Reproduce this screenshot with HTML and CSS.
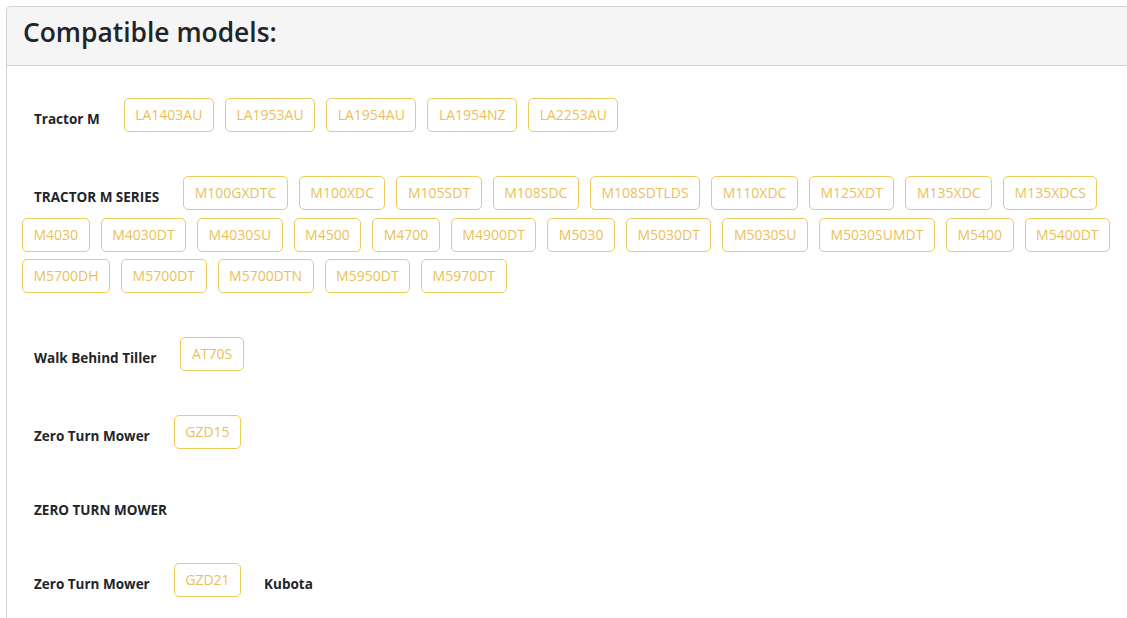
FILE: index.html
```html
<!DOCTYPE html>
<html>
<head>
    <title>Compatible models</title>
    <link rel="stylesheet" href="styles.css">
</head>
<body>
    <div class="card">
        <div class="card-header">
            <h2>Compatible models:</h2>
        </div>
        <div class="card-body">
            <!-- one row per equipment type, tags wrap under the label -->
            <div class="model-group">
                <span class="group-label">Tractor M</span>
                <span class="model-tag">LA1403AU</span>
                <span class="model-tag">LA1953AU</span>
                <span class="model-tag">LA1954AU</span>
                <span class="model-tag">LA1954NZ</span>
                <span class="model-tag">LA2253AU</span>
            </div>

            <div class="model-group">
                <span class="group-label">TRACTOR M SERIES</span>
                <span class="model-tag">M100GXDTC</span>
                <span class="model-tag">M100XDC</span>
                <span class="model-tag">M105SDT</span>
                <span class="model-tag">M108SDC</span>
                <span class="model-tag">M108SDTLDS</span>
                <span class="model-tag">M110XDC</span>
                <span class="model-tag">M125XDT</span>
                <span class="model-tag">M135XDC</span>
                <span class="model-tag">M135XDCS</span>
                <span class="model-tag">M4030</span>
                <span class="model-tag">M4030DT</span>
                <span class="model-tag">M4030SU</span>
                <span class="model-tag">M4500</span>
                <span class="model-tag">M4700</span>
                <span class="model-tag">M4900DT</span>
                <span class="model-tag">M5030</span>
                <span class="model-tag">M5030DT</span>
                <span class="model-tag">M5030SU</span>
                <span class="model-tag">M5030SUMDT</span>
                <span class="model-tag">M5400</span>
                <span class="model-tag">M5400DT</span>
                <span class="model-tag">M5700DH</span>
                <span class="model-tag">M5700DT</span>
                <span class="model-tag">M5700DTN</span>
                <span class="model-tag">M5950DT</span>
                <span class="model-tag">M5970DT</span>
            </div>

            <div class="model-group">
                <span class="group-label">Walk Behind Tiller</span>
                <span class="model-tag">AT70S</span>
            </div>

            <div class="model-group">
                <span class="group-label">Zero Turn Mower</span>
                <span class="model-tag">GZD15</span>
            </div>

            <div class="model-group">
                <span class="group-label">ZERO TURN MOWER</span>
            </div>

            <div class="model-group">
                <span class="group-label">Zero Turn Mower</span>
                <span class="model-tag">GZD21</span>
                <span class="group-label">Kubota</span>
            </div>
        </div>
    </div>
</body>
</html>
```

FILE: styles.css
```css
body {
    margin: 0;
    padding: 6px 0 0 6px;
    background: #fff;
    font-family: "Open Sans", "Noto Sans", sans-serif;
    color: #212529;
}
.card {
    border: 1px solid #d2d2d2;
    border-right: none;
    border-bottom: none;
    border-radius: 5px 0 0 0;
    min-height: 620px;
}
.card-header {
    background: #f5f5f5;
    border-bottom: 1px solid #d2d2d2;
    border-radius: 5px 0 0 0;
    box-sizing: border-box;
    height: 59px;
    padding: 7px 16px 0;
}
.card-header h2 {
    margin: 0;
    font-size: 26.4px;
    line-height: 36px;
    font-weight: 600;
}
.card-body {
    padding: 32px 0 0 15px;
}
.model-group {
    display: flex;
    flex-wrap: wrap;
    align-items: center;
    column-gap: 11px;
    row-gap: 7.5px;
    margin-bottom: 44px;
}
.group-label {
    font-size: 13.5px;
    font-weight: 700;
    line-height: 18px;
    padding-top: 8px;
    margin: 0 13px 0 12px;
}
.model-tag {
    border: 1px solid #edcb5c;
    border-radius: 5px;
    color: #eabf5a;
    font-size: 14px;
    line-height: 20px;
    padding: 6px 10.5px;
}
```
